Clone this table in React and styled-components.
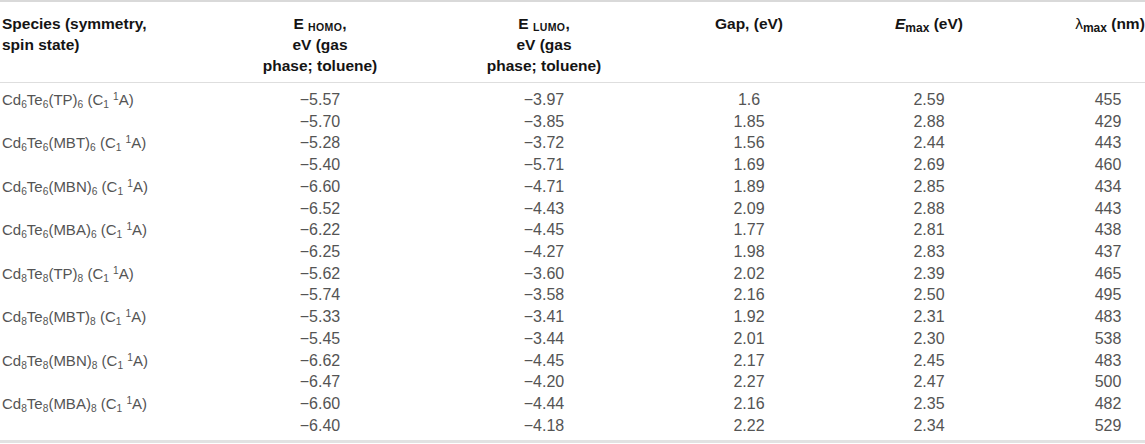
import React from "react"
import styled, { createGlobalStyle } from "styled-components"

const GlobalStyle = createGlobalStyle`
  body {
    margin: 0;
    background: #fff;
    font-family: "Liberation Sans", Arial, sans-serif;
  }
`

const Table = styled.div`
  width: 1145px;
  border-top: 2px solid #d9d9d9;
  border-bottom: 3px solid #e2e2e2;
  box-sizing: border-box;
`

const Row = styled.div`
  display: grid;
  grid-template-columns: 215px 210px 238px 172px 188px 122px;
  align-items: start;
`

const HeadRow = styled(Row)`
  padding: 11px 0 6px;
  border-bottom: 1px solid #dedede;
`

const Body = styled.div`
  padding: 6px 0 3px;
`

const HeadCell = styled.div`
  font-size: 15.5px;
  line-height: 21px;
  font-weight: 700;
  color: #141414;
  white-space: nowrap;
  text-align: ${(p) => p.$align || "center"};
  padding-left: ${(p) => p.$pl || 0}px;
`

const Cell = styled.div`
  font-size: ${(p) => (p.$label ? 15 : 16)}px;
  line-height: 21.73px;
  height: 21.73px;
  color: #545454;
  white-space: nowrap;
  text-align: ${(p) => p.$align || "center"};
  padding-left: ${(p) => p.$pl || 0}px;
`

const Sub = styled.sub`
  font-size: 0.68em;
  line-height: 0;
  vertical-align: -0.25em;
`

const Sup = styled.sup`
  font-size: 0.68em;
  line-height: 0;
  vertical-align: 0.45em;
`

const SmallSub = styled.span`
  font-size: 10.5px;
  line-height: 0;
  vertical-align: -2px;
  letter-spacing: 0.4px;
`

const MaxSub = styled.span`
  font-size: 12px;
  line-height: 0;
  vertical-align: -3px;
`

const Lambda = styled.span`
  font-weight: 400;
`

const data = [
  ["6", "TP", ["−5.57", "−3.97", "1.6", "2.59", "455"], ["−5.70", "−3.85", "1.85", "2.88", "429"]],
  ["6", "MBT", ["−5.28", "−3.72", "1.56", "2.44", "443"], ["−5.40", "−5.71", "1.69", "2.69", "460"]],
  ["6", "MBN", ["−6.60", "−4.71", "1.89", "2.85", "434"], ["−6.52", "−4.43", "2.09", "2.88", "443"]],
  ["6", "MBA", ["−6.22", "−4.45", "1.77", "2.81", "438"], ["−6.25", "−4.27", "1.98", "2.83", "437"]],
  ["8", "TP", ["−5.62", "−3.60", "2.02", "2.39", "465"], ["−5.74", "−3.58", "2.16", "2.50", "495"]],
  ["8", "MBT", ["−5.33", "−3.41", "1.92", "2.31", "483"], ["−5.45", "−3.44", "2.01", "2.30", "538"]],
  ["8", "MBN", ["−6.62", "−4.45", "2.17", "2.45", "483"], ["−6.47", "−4.20", "2.27", "2.47", "500"]],
  ["8", "MBA", ["−6.60", "−4.44", "2.16", "2.35", "482"], ["−6.40", "−4.18", "2.22", "2.34", "529"]],
]

const Species = ({ n, ligand }) => (
  <>
    Cd<Sub>{n}</Sub>Te<Sub>{n}</Sub>({ligand})<Sub>{n}</Sub> (C<Sub>1</Sub> <Sup>1</Sup>A)
  </>
)

const ValueRow = ({ label, values }) => (
  <Row>
    <Cell $label $align="left" $pl={2}>{label}</Cell>
    <Cell>{values[0]}</Cell>
    <Cell>{values[1]}</Cell>
    <Cell>{values[2]}</Cell>
    <Cell>{values[3]}</Cell>
    <Cell $pl={48}>{values[4]}</Cell>
  </Row>
)

const App = () => (
  <>
    <GlobalStyle />
    <Table>
      <HeadRow>
        <HeadCell $align="left" $pl={2}>
          Species (symmetry,
          <br />
          spin state)
        </HeadCell>
        <HeadCell>
          E <SmallSub>HOMO</SmallSub>,<br />
          eV (gas
          <br />
          phase; toluene)
        </HeadCell>
        <HeadCell>
          E <SmallSub>LUMO</SmallSub>,<br />
          eV (gas
          <br />
          phase; toluene)
        </HeadCell>
        <HeadCell>Gap, (eV)</HeadCell>
        <HeadCell>
          <i>E</i>
          <MaxSub>max</MaxSub> (eV)
        </HeadCell>
        <HeadCell $pl={52}>
          <Lambda>λ</Lambda>
          <MaxSub>max</MaxSub> (nm)
        </HeadCell>
      </HeadRow>
      <Body>
        {data.map(([n, ligand, a, b]) => (
          <React.Fragment key={n + ligand}>
            <ValueRow label={<Species n={n} ligand={ligand} />} values={a} />
            <ValueRow label="" values={b} />
          </React.Fragment>
        ))}
      </Body>
    </Table>
  </>
)

export default App
